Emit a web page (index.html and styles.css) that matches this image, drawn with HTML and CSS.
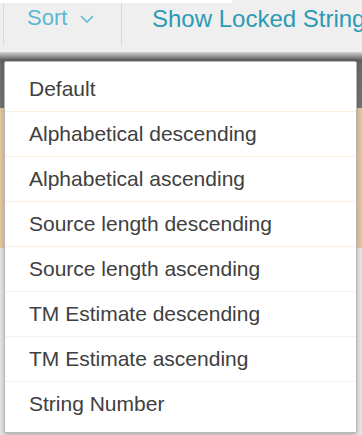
FILE: index.html
```html
<!DOCTYPE html>
<html lang="en">

<head>
    <meta charset="UTF-8">
    <meta name="viewport" content="width=device-width, initial-scale=1.0">
    <title>Sort Menu</title>
    <link rel="stylesheet" href="styles.css">
</head>

<body>
    <div class="top">
        <div class="tab-edge"></div>
        <div class="toolbar">
            <div class="tool sort">Sort
                <svg class="chevron" width="14" height="8" viewBox="0 0 14 8">
                    <path d="M1 1 L7 7 L13 1" fill="none" stroke="#5cb8d6" stroke-width="1.6" />
                </svg>
            </div>
            <div class="tool locked">Show Locked Strings</div>
        </div>
    </div>

    <div class="page">
        <div class="row dark"></div>
        <div class="row warm"></div>
        <div class="row warm"></div>
        <div class="row warm short"></div>
        <div class="row plain"></div>

        <ul class="menu">
            <li class="warm-line">Default</li>
            <li class="warm-line">Alphabetical descending</li>
            <li class="warm-line">Alphabetical ascending</li>
            <li class="warm-line">Source length descending</li>
            <li>Source length ascending</li>
            <li>TM Estimate descending</li>
            <li>TM Estimate ascending</li>
            <li class="last">String Number</li>
        </ul>
    </div>
</body>

</html>
```

FILE: styles.css
```css
body {
    margin: 0;
    font-family: "Liberation Sans", Arial, sans-serif;
    background-color: #e6e6e6;
    overflow: hidden;
}

.top {
    background-color: #efefef;
    height: 52px;
    overflow: hidden;
}

.tab-edge {
    width: 232px;
    height: 3px;
    background-color: #fff;
}

.toolbar {
    display: flex;
    height: 42px;
}

.tool {
    display: flex;
    flex-shrink: 0;
    align-items: center;
    border-left: 1px solid #d8d8d8;
    white-space: nowrap;
}

.sort {
    margin-left: 3px;
    width: 118px;
    padding-left: 23px;
    box-sizing: border-box;
    color: #5cb8d6;
    font-size: 22px;
    padding-bottom: 12px;
}

.chevron {
    margin-left: 13px;
    margin-top: 2px;
}

.locked {
    padding-left: 30px;
    color: #2a9ab6;
    font-size: 24px;
    padding-bottom: 11px;
}

.page {
    position: relative;
}

.row {
    height: 46px;
}

.dark {
    height: 56px;
    background: linear-gradient(#d4d4d4 0, #5e5e5e 8px, #6c6c6c 14px, #747474 100%);
}

.warm {
    background-color: #e5c89f;
}

.short {
    height: 48px;
}

.plain {
    height: 200px;
    background-color: #e6e6e6;
}

.menu {
    position: absolute;
    top: 9px;
    left: 4px;
    width: 351px;
    margin: 0;
    padding: 5px 0;
    list-style: none;
    background-color: #fff;
    border: 1px solid #b8b8b8;
    border-radius: 2px;
    box-shadow: 0 2px 5px rgba(0, 0, 0, 0.25);
}

.menu li {
    height: 45px;
    line-height: 44px;
    padding-left: 24px;
    font-size: 21px;
    color: #404040;
    border-bottom: 1px solid #f2f2f2;
    box-sizing: border-box;
}

.menu li.warm-line {
    border-bottom-color: #fcefe0;
}

.menu li.last {
    border-bottom: none;
}
```
